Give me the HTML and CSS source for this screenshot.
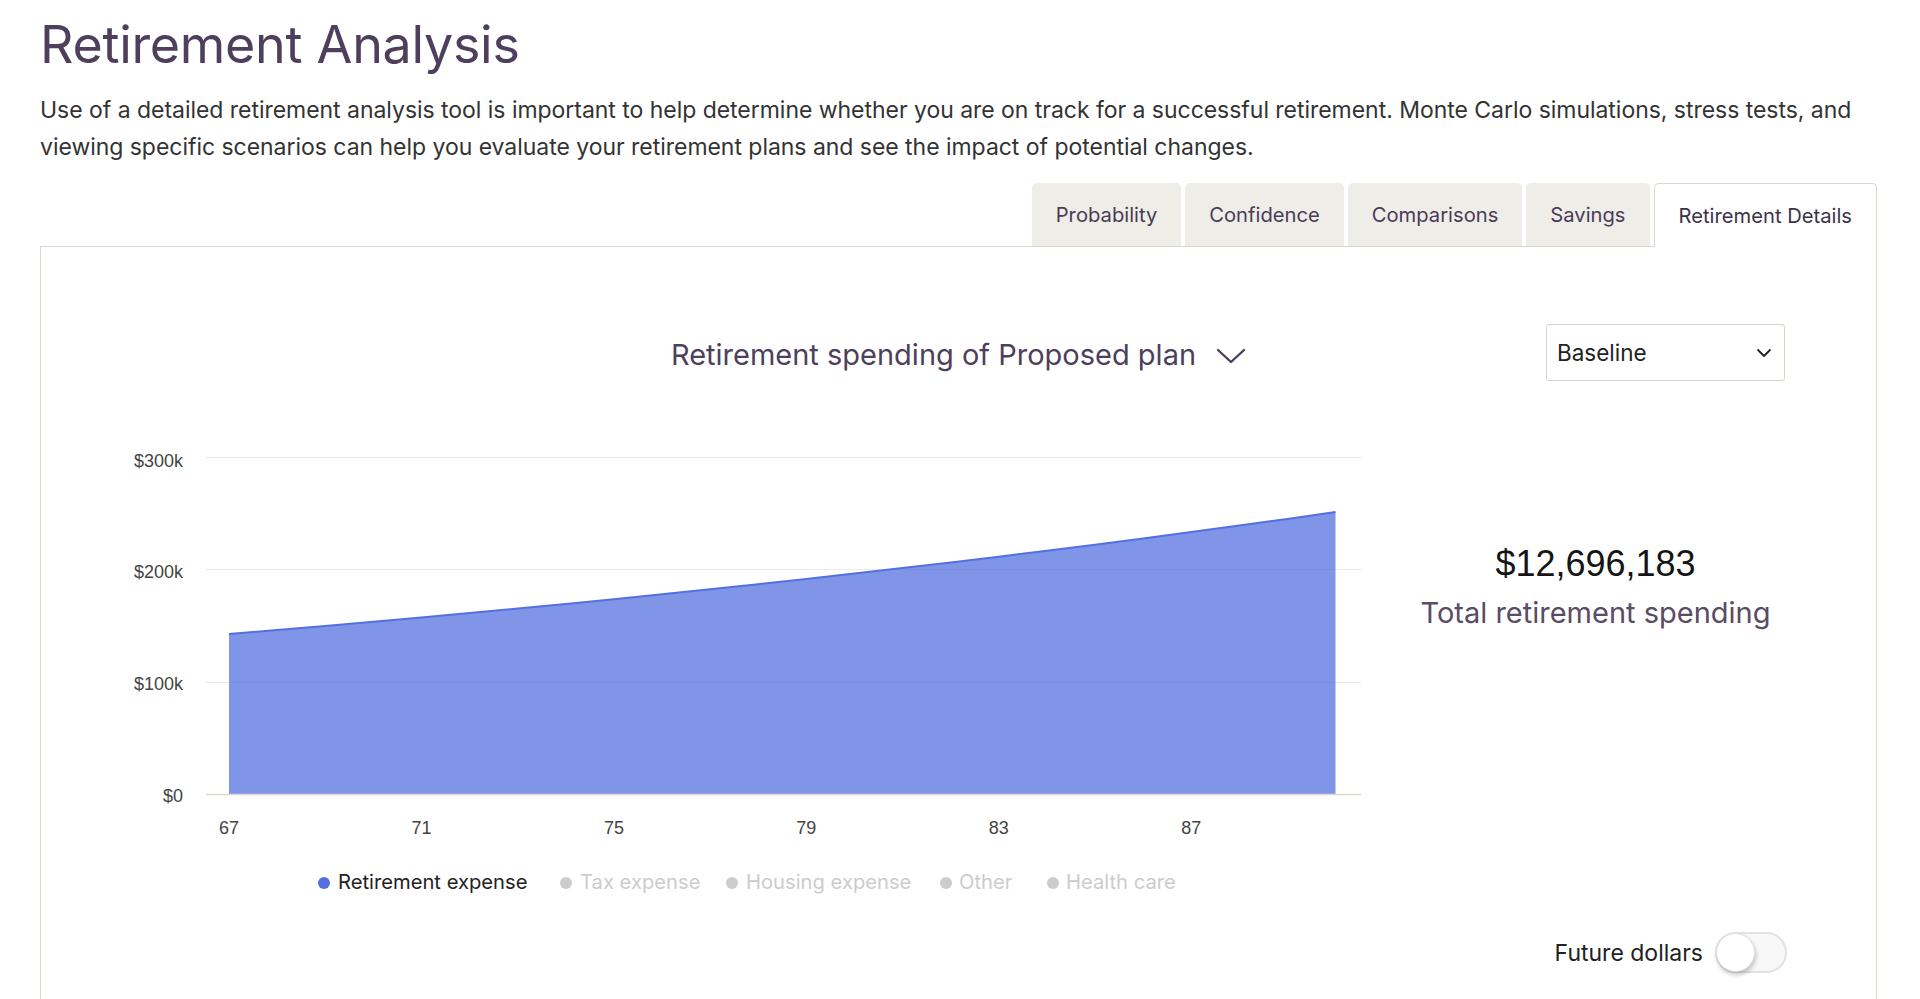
FILE: index.html
```
<!DOCTYPE html>
<html lang="en">
<head>
<meta charset="utf-8">
<title>Retirement Analysis</title>
<link rel="stylesheet" href="styles.css">
</head>
<body>
<main class="page">
  <h1 class="title">Retirement Analysis</h1>
  <p class="intro">Use of a detailed retirement analysis tool is important to help determine whether you are on track for a successful retirement. Monte Carlo simulations, stress tests, and viewing specific scenarios can help you evaluate your retirement plans and see the impact of potential changes.</p>

  <nav class="tabs">
    <div class="tab">Probability</div>
    <div class="tab">Confidence</div>
    <div class="tab">Comparisons</div>
    <div class="tab">Savings</div>
    <div class="tab tab-active">Retirement Details</div>
  </nav>

  <section class="panel">
    <div class="panel-head">
      <div></div>
      <div class="chart-title">
        <span>Retirement spending of Proposed plan</span>
        <svg class="title-chev" width="30" height="18" viewBox="0 0 30 18"><path d="M2 3 L15 15 L28 3" fill="none" stroke="#4a3b57" stroke-width="2.3" stroke-linecap="round" stroke-linejoin="round"/></svg>
      </div>
      <div class="select">
        <span>Baseline</span>
        <svg width="16" height="10" viewBox="0 0 16 10"><path d="M2 2 L8 8 L14 2" fill="none" stroke="#222" stroke-width="1.8" stroke-linecap="round" stroke-linejoin="round"/></svg>
      </div>
    </div>

    <div class="panel-body">
      <svg class="chart" width="1334" height="480" viewBox="0 0 1334 480">
        <g stroke="#ebe9e3" stroke-width="1">
          <line x1="165" y1="39.5" x2="1320" y2="39.5"/>
          <line x1="165" y1="151.5" x2="1320" y2="151.5"/>
          <line x1="165" y1="264.5" x2="1320" y2="264.5"/>
        </g>
        <path d="M188 216 L236.1 212 L284.2 207.9 L332.3 203.7 L380.4 199.4 L428.6 195 L476.7 190.5 L524.8 185.9 L572.9 181.2 L621 176.3 L669.1 171.3 L717.2 166.2 L765.3 161 L813.4 155.6 L861.5 150.1 L909.7 144.5 L957.8 138.7 L1005.9 132.8 L1054 126.7 L1102.1 120.5 L1150.2 114.1 L1198.3 107.6 L1246.4 100.9 L1294.5 94 L1294.5 376 L188 376 Z" fill="#5470e0" fill-opacity="0.74"/>
        <path d="M188 216 L236.1 212 L284.2 207.9 L332.3 203.7 L380.4 199.4 L428.6 195 L476.7 190.5 L524.8 185.9 L572.9 181.2 L621 176.3 L669.1 171.3 L717.2 166.2 L765.3 161 L813.4 155.6 L861.5 150.1 L909.7 144.5 L957.8 138.7 L1005.9 132.8 L1054 126.7 L1102.1 120.5 L1150.2 114.1 L1198.3 107.6 L1246.4 100.9 L1294.5 94" fill="none" stroke="#5470e0" stroke-width="2"/>
        <line x1="165" y1="376.5" x2="1320" y2="376.5" stroke="#ddd8cc" stroke-width="1.5"/>
        <g class="axis-label" text-anchor="end">
          <text x="142" y="49">$300k</text>
          <text x="142" y="160">$200k</text>
          <text x="142" y="272">$100k</text>
          <text x="142" y="384">$0</text>
        </g>
        <g class="axis-label" text-anchor="middle">
          <text x="188" y="416">67</text>
          <text x="380.4" y="416">71</text>
          <text x="572.9" y="416">75</text>
          <text x="765.3" y="416">79</text>
          <text x="957.8" y="416">83</text>
          <text x="1150.2" y="416">87</text>
        </g>
        <g class="legend">
          <circle cx="283" cy="465" r="6" fill="#5470e0"/>
          <text x="297" y="471" class="legend-on">Retirement expense</text>
          <circle cx="525" cy="465" r="6" fill="#cccccc"/>
          <text x="539" y="471" class="legend-off">Tax expense</text>
          <circle cx="691" cy="465" r="6" fill="#cccccc"/>
          <text x="705" y="471" class="legend-off">Housing expense</text>
          <circle cx="905" cy="465" r="6" fill="#cccccc"/>
          <text x="918" y="471" class="legend-off">Other</text>
          <circle cx="1012" cy="465" r="6" fill="#cccccc"/>
          <text x="1025" y="471" class="legend-off">Health care</text>
        </g>
      </svg>

      <div class="summary">
        <div class="total">$12,696,183</div>
        <div class="total-label">Total retirement spending</div>
      </div>
    </div>

    <div class="panel-foot">
      <span class="toggle-label">Future dollars</span>
      <div class="toggle"><div class="knob"></div></div>
    </div>
  </section>
</main>
</body>
</html>
```

FILE: styles.css
```
* { box-sizing: border-box; }

html, body {
  margin: 0;
  padding: 0;
  background: #ffffff;
  height: 999px;
  overflow: hidden;
}

body {
  font-family: Inter, "Noto Sans", "Liberation Sans", sans-serif;
  color: #333333;
}

.page {
  padding: 0 43px 0 40px;
}

.title {
  margin: 0;
  padding-top: 13px;
  font-size: 52px;
  font-weight: 400;
  line-height: 64px;
  letter-spacing: -0.3px;
  color: #4e3f5c;
}

.intro {
  margin: 15px 0 0 0;
  font-size: 23px;
  line-height: 37px;
  letter-spacing: -0.035px;
  color: #333333;
}

.tabs {
  display: flex;
  justify-content: flex-end;
  gap: 4px;
  margin-top: 17px;
}

.tab {
  height: 63px;
  padding: 0 24px;
  display: flex;
  align-items: center;
  font-size: 20.2px;
  color: #4a3b57;
  background: #efede8;
  border-radius: 5px 5px 0 0;
}

.tab-active {
  background: #ffffff;
  border: 1px solid #ddd8cc;
  border-bottom: none;
  color: #3d3348;
  position: relative;
  top: 1px;
  margin-top: -1px;
  height: 64px;
}

.panel {
  border: 1px solid #ddd8cc;
  border-bottom: none;
  height: 760px;
  padding-top: 77px;
}

.panel-head {
  display: grid;
  grid-template-columns: 1fr auto 1fr;
  align-items: center;
  height: 57px;
}

.chart-title {
  display: flex;
  align-items: center;
  gap: 20px;
  font-size: 29px;
  color: #4e3f5c;
  margin-top: 4px;
}

.title-chev {
  display: block;
  margin-top: 2px;
}

.select {
  justify-self: end;
  margin-right: 91px;
  width: 239px;
  height: 57px;
  border: 1px solid #d8d3c7;
  border-radius: 3px;
  display: flex;
  align-items: center;
  justify-content: space-between;
  padding: 0 12px 0 10px;
  font-size: 22.5px;
  color: #222222;
}

.panel-body {
  display: flex;
  margin-top: 37px;
}

.chart {
  display: block;
  flex: none;
}

.axis-label text {
  font-family: "Liberation Sans", Arial, sans-serif;
  font-size: 18px;
  fill: #444444;
}

.legend text {
  font-family: Inter, "Noto Sans", sans-serif;
  font-size: 20.2px;
}

.legend-on { fill: #222222; }
.legend-off { fill: #cccccc; }

.summary {
  flex: 1;
  padding-right: 60px;
  padding-top: 124px;
  text-align: center;
}

.total {
  font-family: "Liberation Sans", Arial, sans-serif;
  font-size: 36px;
  line-height: 44px;
  color: #151515;
}

.total-label {
  margin-top: 8px;
  font-size: 29px;
  line-height: 38px;
  color: #5a4b66;
}

.panel-foot {
  display: flex;
  justify-content: flex-end;
  align-items: center;
  gap: 12px;
  margin-top: 34px;
  margin-right: 89px;
}

.toggle-label {
  font-size: 23px;
  color: #222222;
}

.toggle {
  width: 72px;
  height: 41px;
  border-radius: 21px;
  border: 2px solid #e2e2e2;
  background: #f8f8f8;
  position: relative;
}

.knob {
  position: absolute;
  left: -1px;
  top: -1px;
  width: 39px;
  height: 39px;
  border-radius: 50%;
  background: #ffffff;
  border: 1px solid #e0e0e0;
  box-shadow: 1px 3px 4px rgba(0, 0, 0, 0.22);
}
```
